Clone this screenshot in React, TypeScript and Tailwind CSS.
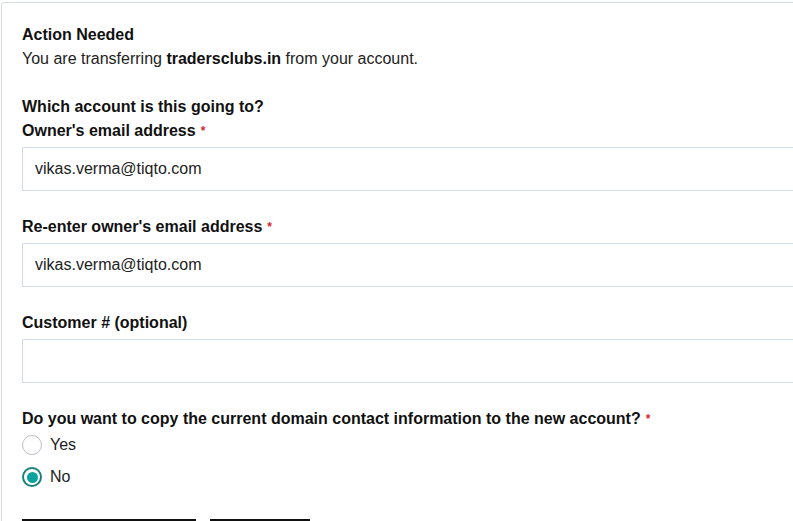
import React from "react";

function Req() {
	return <span className="ml-[5px] text-[12px] text-[#d4282c] align-top">*</span>;
}

function Field({ label, value, required }: { label: string; value?: string; required?: boolean }) {
	return (
		<div className="mt-6">
			<label className="block font-bold leading-6">
				{label}
				{required && <Req />}
			</label>
			<div className="mt-1 h-[44px] border border-[#d5dbe2] pl-3 flex items-center text-[16px] text-[#222]">
				{value}
			</div>
		</div>
	);
}

function Radio({ label, checked }: { label: string; checked?: boolean }) {
	return (
		<label className="flex items-center gap-2 h-5 leading-5">
			{checked ? (
				<span className="w-5 h-5 rounded-full border-2 border-[#187f7c] flex items-center justify-center">
					<span className="w-[11px] h-[11px] rounded-full bg-[#0aa39f]" />
				</span>
			) : (
				<span className="w-5 h-5 rounded-full border border-[#b9bfc7] bg-white" />
			)}
			<span>{label}</span>
		</label>
	);
}

export default function App() {
	return (
		<main className="w-[793px] h-[521px] overflow-hidden bg-white text-[#111] text-[16px] font-['Liberation_Sans',Arial,sans-serif]">
			<section className="mt-[2px] ml-[1px] w-[900px] border border-[#d5dbe2] rounded-[3px] pl-[20px] pt-[20px] pb-10">
				<div className="w-[860px]">
					<h1 className="font-bold leading-6">Action Needed</h1>
					<p className="leading-6 text-[#222]">
						You are transferring <b className="text-[#111]">tradersclubs.in</b> from your account.
					</p>

					<h2 className="mt-6 font-bold leading-6">Which account is this going to?</h2>
					<label className="block font-bold leading-6">
						Owner's email address
						<Req />
					</label>
					<div className="mt-1 h-[44px] border border-[#d5dbe2] pl-3 flex items-center text-[#222]">
						vikas.verma@tiqto.com
					</div>

					<Field label="Re-enter owner's email address" value="vikas.verma@tiqto.com" required />
					<Field label="Customer # (optional)" />

					<div className="mt-6">
						<div className="font-bold leading-6">
							Do you want to copy the current domain contact information to the new account?
							<Req />
						</div>
						<div className="mt-1 flex flex-col gap-3 text-[#222]">
							<Radio label="Yes" />
							<Radio label="No" checked />
						</div>
					</div>

					<div className="mt-8 flex gap-[14px]">
						<button aria-label="Continue" className="w-[174px] h-10 bg-[#111]" />
						<button aria-label="Cancel" className="w-[100px] h-10 bg-[#111]" />
					</div>
				</div>
			</section>
		</main>
	);
}
